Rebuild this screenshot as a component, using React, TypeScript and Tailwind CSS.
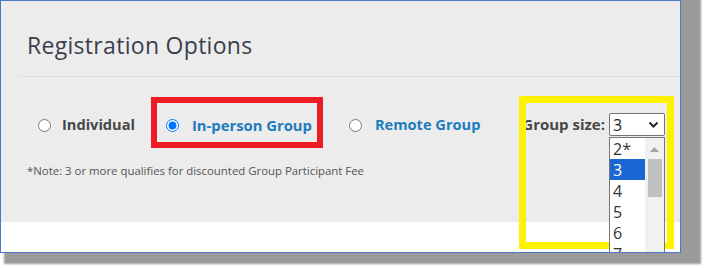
import React from 'react';

const sizes = ['2*', '3', '4', '5', '6', '7'];

const Radio: React.FC<{ checked?: boolean; name: string }> = ({ checked, name }) => (
  <input
    type="radio"
    name={name}
    defaultChecked={checked}
    className="m-0 h-[13px] w-[13px] shrink-0"
  />
);

export default function App() {
  return (
    <div className="min-h-screen bg-white" style={{ fontFamily: '"Open Sans", "Noto Sans", sans-serif' }}>
      <div className="relative w-[681px] h-[253px] border border-[#4a78c8] bg-white overflow-hidden shadow-[12px_3px_2px_8px_#9b9b9b]">
        <div className="h-[221px] bg-[#ececec]">
          <h1 className="pt-[29px] pl-[26px] text-[23px] leading-[30px] tracking-[0.3px] text-[#3b3f4c]">Registration Options</h1>
          <div className="mt-[16px] ml-[18px] h-px bg-[#dedede]" />

          <div className="flex items-start pl-[37px] pr-[15px] mt-[19px]">
            <label className="mt-[19px] h-[20px] flex items-center gap-[11px]">
              <Radio name="reg" />
              <span className="text-[14.6px] font-bold text-[#474747]">Individual</span>
            </label>

            <div className="ml-[16px] mt-px h-[51px] border-[6px] border-[#ed1c24] pl-[9px] pr-[5px] pt-[5px] flex">
              <label className="h-[34px] flex items-center gap-[13px]">
                <Radio name="reg" checked />
                <span className="text-[14.8px] font-bold text-[#1d7bc0]">In-person Group</span>
              </label>
            </div>

            <label className="ml-[26px] mt-[19px] h-[20px] flex items-center gap-[13px]">
              <Radio name="reg" />
              <span className="text-[14.6px] font-bold text-[#1d7bc0]">Remote Group</span>
            </label>

            <div className="ml-auto mt-[17px] flex items-center gap-[4px]">
              <span className="text-[15px] font-bold text-[#474747]">Group size:</span>
              <div className="relative">
                <div className="w-[56px] h-[23px] border border-[#767676] rounded-[2px] bg-white flex items-center justify-between pl-[3px] pr-[5px]">
                  <span className="text-[16px] leading-none text-[#222]">3</span>
                  <svg width="11" height="7" viewBox="0 0 11 7" fill="none">
                    <path d="M1.5 1.5 L5.5 5.5 L9.5 1.5" stroke="#222" strokeWidth="2" />
                  </svg>
                </div>
              </div>
            </div>
          </div>

          <p className="mt-[15px] pl-[26px] text-[11.4px] leading-[16px] text-[#555]">
            *Note: 3 or more qualifies for discounted Group Participant Fee
          </p>
        </div>

        {/* yellow highlight annotation */}
        <div className="absolute left-[518px] top-[95px] w-[155px] h-[153px] border-[7px] border-[#fff200] z-10" />

        {/* open dropdown list */}
        <div className="absolute left-[608px] top-[136px] w-[56px] h-[130px] border border-[#767676] bg-white z-20 flex">
          <div className="flex-1">
            {sizes.map((s) => (
              <div
                key={s}
                className={`h-[21px] pl-[3px] flex items-center text-[16px] ${s === '3' ? 'bg-[#1a66d2] text-white' : 'text-[#333]'}`}
              >
                {s}
              </div>
            ))}
          </div>
          <div className="w-[19px] bg-[#f1f1f1] flex flex-col items-center">
            <svg className="mt-[9px]" width="9" height="5" viewBox="0 0 9 5">
              <path d="M0 5 L4.5 0 L9 5 Z" fill="#a3a3a3" />
            </svg>
            <div className="mt-[7px] w-[14px] h-[38px] bg-[#c1c1c1]" />
          </div>
        </div>
      </div>
    </div>
  );
}
